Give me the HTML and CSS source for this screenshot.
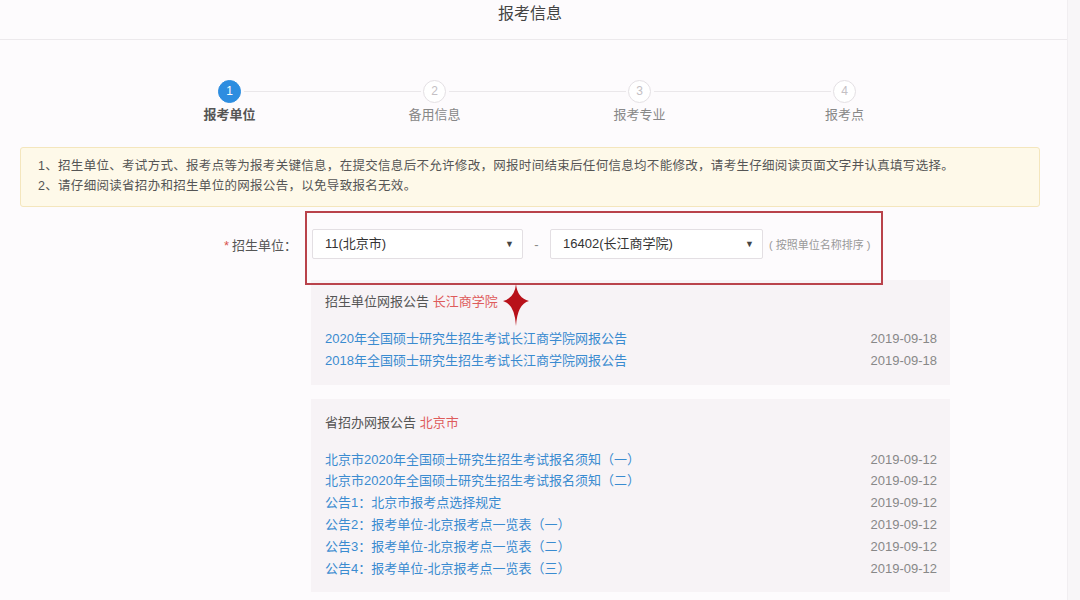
FILE: index.html
```html
<!DOCTYPE html>
<html lang="zh-CN">
<head>
    <meta charset="UTF-8">
    <title>报考信息</title>
    <link rel="stylesheet" href="styles.css">
</head>
<body>
    <div class="page">
        <div class="header">报考信息</div>

        <div class="main">
            <!-- 步骤条 -->
            <div class="steps">
                <div class="step active"><span class="dot">1</span><span class="name">报考单位</span></div>
                <div class="step"><span class="dot">2</span><span class="name">备用信息</span></div>
                <div class="step"><span class="dot">3</span><span class="name">报考专业</span></div>
                <div class="step last"><span class="dot">4</span><span class="name">报考点</span></div>
            </div>

            <div class="notice">
                <p>1、招生单位、考试方式、报考点等为报考关键信息，在提交信息后不允许修改，网报时间结束后任何信息均不能修改，请考生仔细阅读页面文字并认真填写选择。</p>
                <p>2、请仔细阅读省招办和招生单位的网报公告，以免导致报名无效。</p>
            </div>

            <div class="form-area">
                <div class="form-row">
                    <label class="field-label"><i>*</i>招生单位：</label>
                    <div class="select sel-1">11(北京市)<span class="arrow">&#9660;</span></div>
                    <span class="dash">-</span>
                    <div class="select sel-2">16402(长江商学院)<span class="arrow">&#9660;</span></div>
                    <span class="hint">( 按照单位名称排序 )</span>
                </div>

                <div class="panel">
                    <div class="panel-title">招生单位网报公告 <em>长江商学院</em></div>
                    <ul class="news">
                        <li><a>2020年全国硕士研究生招生考试长江商学院网报公告</a><span>2019-09-18</span></li>
                        <li><a>2018年全国硕士研究生招生考试长江商学院网报公告</a><span>2019-09-18</span></li>
                    </ul>
                </div>

                <div class="panel">
                    <div class="panel-title">省招办网报公告 <em>北京市</em></div>
                    <ul class="news">
                        <li><a>北京市2020年全国硕士研究生招生考试报名须知（一）</a><span>2019-09-12</span></li>
                        <li><a>北京市2020年全国硕士研究生招生考试报名须知（二）</a><span>2019-09-12</span></li>
                        <li><a>公告1：北京市报考点选择规定</a><span>2019-09-12</span></li>
                        <li><a>公告2：报考单位-北京报考点一览表（一）</a><span>2019-09-12</span></li>
                        <li><a>公告3：报考单位-北京报考点一览表（二）</a><span>2019-09-12</span></li>
                        <li><a>公告4：报考单位-北京报考点一览表（三）</a><span>2019-09-12</span></li>
                    </ul>
                </div>

                <!-- 标注 -->
                <div class="mark-box"></div>
                <svg class="mark-star" width="26" height="42" viewBox="0 0 26 42">
                    <path d="M13 0 Q14.3 14 26 17 Q14.3 20 13 42 Q11.7 20 0 17 Q11.7 14 13 0 Z" fill="#b8111a"/>
                </svg>
            </div>
        </div>
    </div>
    <div class="scroll-strip"></div>
</body>
</html>
```

FILE: styles.css
```css
* {
    box-sizing: border-box;
    margin: 0;
    padding: 0;
}

body {
    display: flex;
    min-height: 600px;
    background: #fdfbfd;
    font-family: "Liberation Sans", "Noto Sans CJK SC", sans-serif;
    font-size: 13px;
    color: #555;
    overflow: hidden;
}

.page {
    width: 1067px;
}

.scroll-strip {
    flex: 1;
    background: #f8f6f8;
    border-left: 1px solid #f1eef1;
}

.header {
    height: 40px;
    line-height: 28px;
    text-align: center;
    font-size: 16px;
    color: #444;
    border-bottom: 1px solid #ece9ec;
    padding-right: 7px;
}

.main {
    width: 1060px;
}

/* 步骤条 */
.steps {
    display: grid;
    grid-template-columns: repeat(4, 205px);
    margin: 40px 0 0 127px;
}

.step {
    position: relative;
    display: flex;
    flex-direction: column;
    align-items: center;
}

.step::after {
    content: "";
    position: absolute;
    top: 11px;
    left: calc(50% + 14px);
    width: 177px;
    height: 1px;
    background: #eae7ea;
}

.step.last::after {
    display: none;
}

.dot {
    width: 23px;
    height: 23px;
    border-radius: 50%;
    border: 1px solid #e4e0e4;
    background: #fff;
    color: #c4c0c4;
    font-size: 12px;
    line-height: 21px;
    text-align: center;
}

.name {
    margin-top: 1px;
    color: #888;
    font-size: 13px;
}

.step.active .dot {
    background: #2d8de0;
    border-color: #2d8de0;
    color: #fff;
}

.step.active .name {
    color: #555;
    font-weight: bold;
}

/* 提示 */
.notice {
    margin: 24px 0 0 20px;
    width: 1020px;
    padding: 8px 17px 10px;
    background: #fef9e9;
    border: 1px solid #f4e6bd;
    border-radius: 3px;
    line-height: 20px;
    font-size: 12.5px;
    letter-spacing: 0.3px;
}

/* 表单 */
.form-area {
    position: relative;
    padding-top: 22px;
}

.form-row {
    display: flex;
    align-items: center;
    height: 30px;
}

.field-label {
    width: 300px;
    padding-right: 3px;
    text-align: right;
    color: #555;
}

.field-label i {
    font-style: normal;
    color: #d9534f;
    margin-right: 3px;
}

.select {
    position: relative;
    height: 30px;
    line-height: 28px;
    padding-left: 12px;
    background: #fff;
    border: 1px solid #e3dfe3;
    border-radius: 2px;
    color: #333;
}

.sel-1 {
    width: 211px;
    margin-left: 12px;
}

.sel-2 {
    width: 213px;
}

.arrow {
    position: absolute;
    right: 8px;
    top: 0;
    font-size: 9px;
    color: #444;
}

.dash {
    width: 27px;
    text-align: center;
    color: #888;
}

.hint {
    margin-left: 6px;
    font-size: 11px;
    color: #999;
}

.panel {
    margin: 21px 0 0 311px;
    width: 639px;
    padding: 12px 13px 13px 14px;
    background: #f7f3f6;
}

.panel + .panel {
    margin-top: 14px;
    padding-top: 14px;
}

.panel-title {
    line-height: 20px;
    color: #555;
}

.panel-title em {
    font-style: normal;
    color: #de5b5b;
}

.news {
    list-style: none;
    margin-top: 16px;
}

.news li {
    display: flex;
    justify-content: space-between;
    line-height: 21.8px;
}

.news a {
    color: #3a8bd0;
}

.news span {
    color: #888;
}

/* 标注 */
.mark-box {
    position: absolute;
    left: 305px;
    top: 4px;
    width: 578px;
    height: 74px;
    border: 2px solid #b9424b;
}

.mark-star {
    position: absolute;
    left: 503px;
    top: 77px;
}
```
